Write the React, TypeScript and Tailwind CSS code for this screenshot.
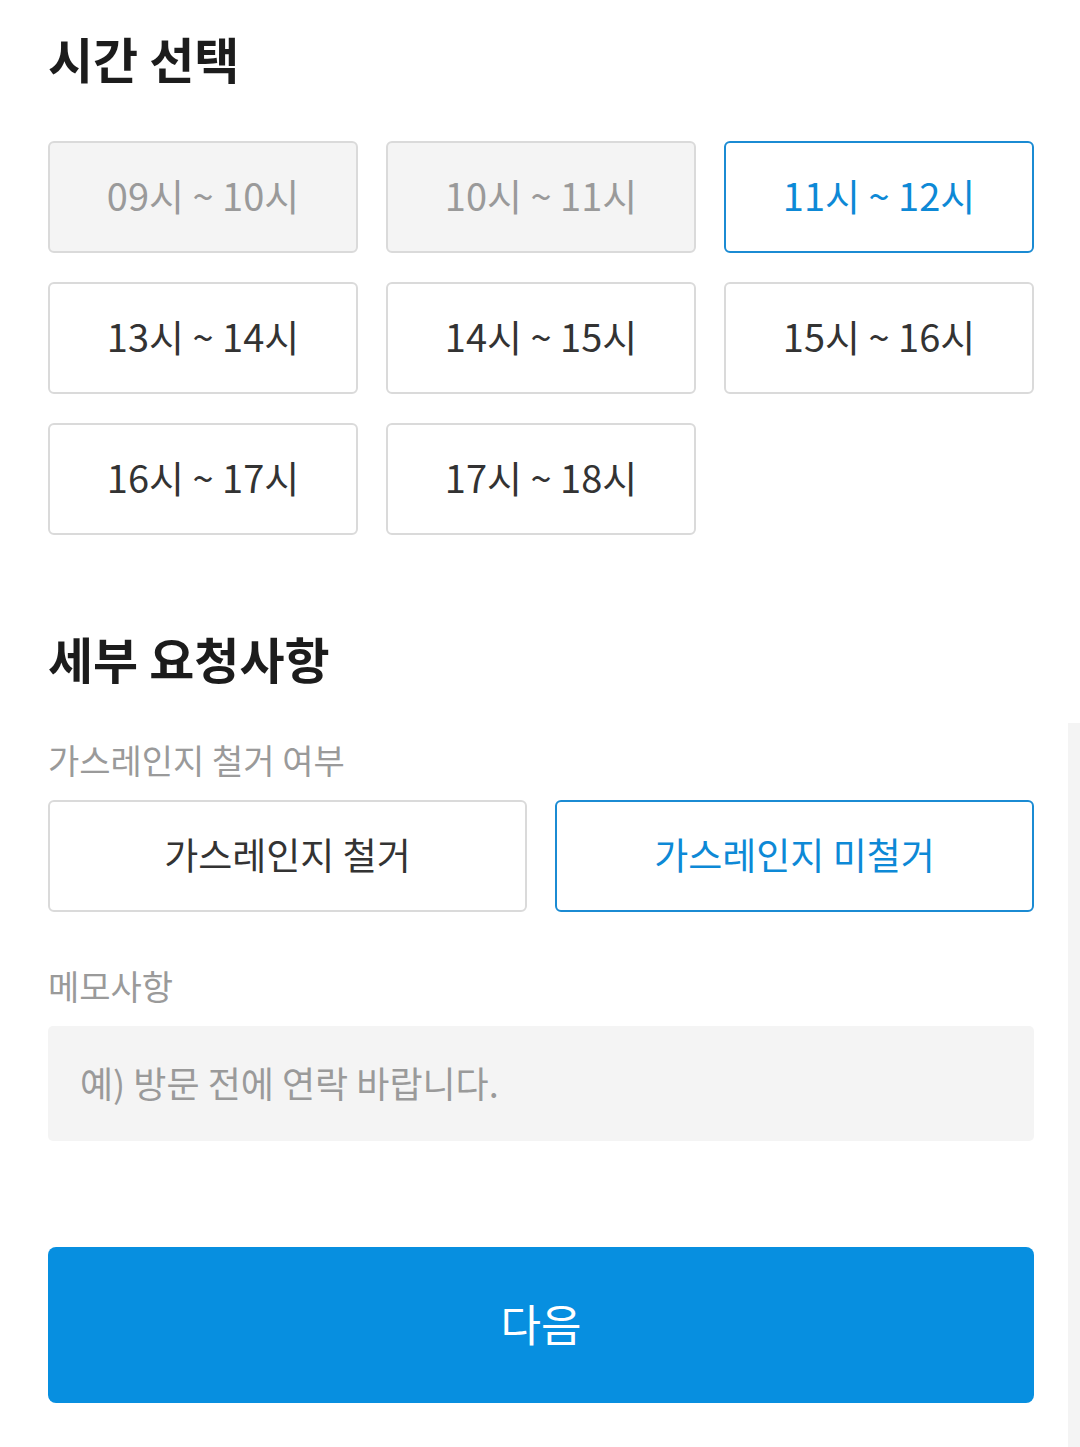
import React from "react";

const font = { fontFamily: '"Noto Sans CJK KR", "Noto Sans", sans-serif' };

type Slot = { label: string; state: "disabled" | "normal" | "selected" };

const slots: Slot[] = [
  { label: "09시 ~ 10시", state: "disabled" },
  { label: "10시 ~ 11시", state: "disabled" },
  { label: "11시 ~ 12시", state: "selected" },
  { label: "13시 ~ 14시", state: "normal" },
  { label: "14시 ~ 15시", state: "normal" },
  { label: "15시 ~ 16시", state: "normal" },
  { label: "16시 ~ 17시", state: "normal" },
  { label: "17시 ~ 18시", state: "normal" },
];

function SlotBox({ s }: { s: Slot }) {
  const cls =
    s.state === "disabled"
      ? "bg-[#f4f4f4] border-[#dadada] text-[#9a9a9a]"
      : s.state === "selected"
      ? "bg-white border-[#1b8bd3] text-[#0d89d6]"
      : "bg-white border-[#dadada] text-[#333333]";
  return (
    <div
      className={`h-[112px] rounded-[6px] border-2 flex items-center justify-center pb-[4px] text-[38px] leading-none ${cls}`}
    >
      {s.label}
    </div>
  );
}

export default function App() {
  return (
    <div className="relative w-[1080px] h-[1447px] bg-white overflow-hidden" style={font}>
      <div className="pl-[48px] pr-[46px] pt-[17px]">
        <div className="h-[80px] flex items-center text-[49px] font-bold text-[#1c1c1c] leading-none">
          시간 선택
        </div>
        <div className="mt-[44px] grid grid-cols-3 gap-x-[28px] gap-y-[29px]">
          {slots.map((s) => (
            <SlotBox key={s.label} s={s} />
          ))}
        </div>
        <div className="mt-[82px] h-[80px] flex items-center text-[49px] font-bold text-[#1c1c1c] leading-none">
          세부 요청사항
        </div>
        <div className="mt-[43px] h-[40px] flex items-center text-[34px] text-[#9a9a9a] leading-none">
          가스레인지 철거 여부
        </div>
        <div className="mt-[20px] grid grid-cols-2 gap-x-[28px]">
          <div className="h-[112px] rounded-[6px] border-2 border-[#dadada] bg-white flex items-center justify-center pb-[3px] text-[37px] text-[#333333] leading-none">
            가스레인지 철거
          </div>
          <div className="h-[112px] rounded-[6px] border-2 border-[#1b8bd3] bg-white flex items-center justify-center pb-[3px] text-[37px] text-[#0d89d6] leading-none">
            가스레인지 미철거
          </div>
        </div>
        <div className="mt-[54px] h-[40px] flex items-center text-[34px] text-[#9a9a9a] leading-none">
          메모사항
        </div>
        <div className="mt-[20px] h-[115px] rounded-[5px] bg-[#f4f4f4] flex items-center pl-[32px] pb-[3px] text-[36px] text-[#9a9a9a] leading-none">
          예) 방문 전에 연락 바랍니다.
        </div>
        <div className="mt-[106px] h-[156px] rounded-[8px] bg-[#078fe0] flex items-center justify-center pb-[4px] text-[44px] text-white leading-none">
          다음
        </div>
      </div>
      <div className="absolute right-0 top-[723px] bottom-0 w-[12px] bg-[#f4f4f4]" />
    </div>
  );
}
